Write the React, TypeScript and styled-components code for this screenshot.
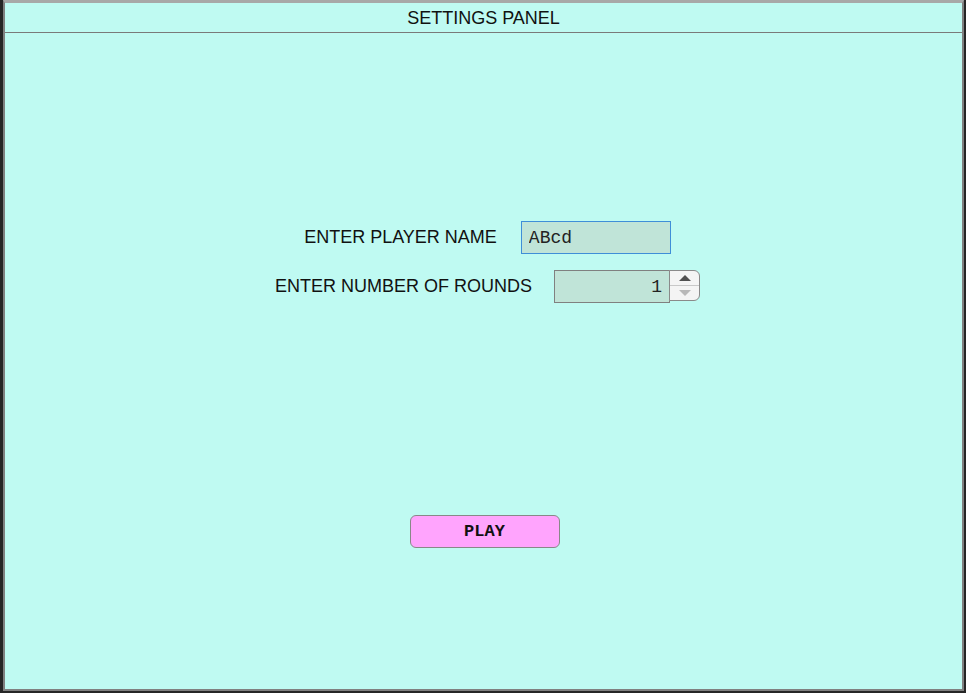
import React from "react";
import styled, { createGlobalStyle } from "styled-components";

const Global = createGlobalStyle`
  html, body { margin: 0; padding: 0; background: #262626; }
  body { font-family: "Liberation Sans", Arial, sans-serif; }
  #root { height: 693px; }
`;

const Backdrop = styled.div`
  box-sizing: border-box;
  height: 693px;
  padding: 0 2px 2px 3px;
  display: flex;
  background: #262626;
`;

const Panel = styled.div`
  flex: 1;
  display: flex;
  flex-direction: column;
  background: #bffaf2;
  border: 2px solid #808080;
  border-top: 3px solid #a8a8a8;
`;

const Header = styled.div`
  height: 30px;
  box-sizing: border-box;
  border-bottom: 1px solid #7a7a7a;
  display: flex;
  align-items: center;
  justify-content: center;
  font-size: 18px;
  color: #111;
  padding-top: 1px;
`;

const Body = styled.div`
  flex: 1;
  display: flex;
  flex-direction: column;
  align-items: center;
  padding-top: 188px;
  padding-left: 8px;
`;

const Row = styled.div<{ $mb: number }>`
  display: flex;
  align-items: center;
  margin-bottom: ${(p) => p.$mb}px;
`;

const Label = styled.label<{ $gap: number }>`
  font-size: 18px;
  color: #111;
  margin-right: ${(p) => p.$gap}px;
`;

const TextField = styled.input`
  box-sizing: border-box;
  width: 150px;
  height: 33px;
  background: #c0e4d8;
  border: 1px solid #3f8ed8;
  outline: none;
  padding: 0 7px;
  font-family: "Liberation Mono", "Courier New", monospace;
  font-size: 18px;
  color: #222;
`;

const NumberWrap = styled.div`
  display: flex;
  height: 33px;
`;

const NumberField = styled.input`
  box-sizing: border-box;
  width: 116px;
  height: 33px;
  background: #c0e4d8;
  border: 1px solid #808080;
  outline: none;
  padding: 0 7px;
  text-align: right;
  font-family: "Liberation Mono", "Courier New", monospace;
  font-size: 18px;
  color: #222;
  appearance: textfield;
  &::-webkit-inner-spin-button,
  &::-webkit-outer-spin-button { -webkit-appearance: none; margin: 0; }
`;

const Spinner = styled.div`
  box-sizing: border-box;
  width: 31px;
  height: 31px;
  margin-left: -1px;
  border: 1px solid #8a8a8a;
  border-radius: 0 6px 6px 0;
  background: #f4f4f4;
  display: flex;
  flex-direction: column;
`;

const SpinBtn = styled.div<{ $dim?: boolean }>`
  flex: 1;
  display: flex;
  align-items: center;
  justify-content: center;
  & + & { border-top: 1px solid #c8c8c8; }
  &::after {
    content: "";
    width: 0;
    height: 0;
    border-left: 6px solid transparent;
    border-right: 6px solid transparent;
    ${(p) =>
      p.$dim
        ? "border-top: 6px solid #b8b8b8;"
        : "border-bottom: 6px solid #505050;"}
  }
`;

const PlayButton = styled.button`
  margin-top: 212px;
  margin-left: -6px;
  box-sizing: border-box;
  width: 150px;
  height: 33px;
  background: #ffa4fd;
  border: 1px solid #888;
  border-radius: 6px;
  font-family: "Liberation Mono", "Courier New", monospace;
  font-weight: bold;
  font-size: 17px;
  color: #111;
  cursor: pointer;
`;

export default function App() {
  return (
    <>
      <Global />
      <Backdrop>
        <Panel>
          <Header>SETTINGS PANEL</Header>
          <Body>
            <Row $mb={16}>
              <Label $gap={24}>ENTER PLAYER NAME</Label>
              <TextField defaultValue="ABcd" />
            </Row>
            <Row $mb={0}>
              <Label $gap={22}>ENTER NUMBER OF ROUNDS</Label>
              <NumberWrap>
                <NumberField type="number" defaultValue={1} />
                <Spinner>
                  <SpinBtn />
                  <SpinBtn $dim />
                </Spinner>
              </NumberWrap>
            </Row>
            <PlayButton>PLAY</PlayButton>
          </Body>
        </Panel>
      </Backdrop>
    </>
  );
}
